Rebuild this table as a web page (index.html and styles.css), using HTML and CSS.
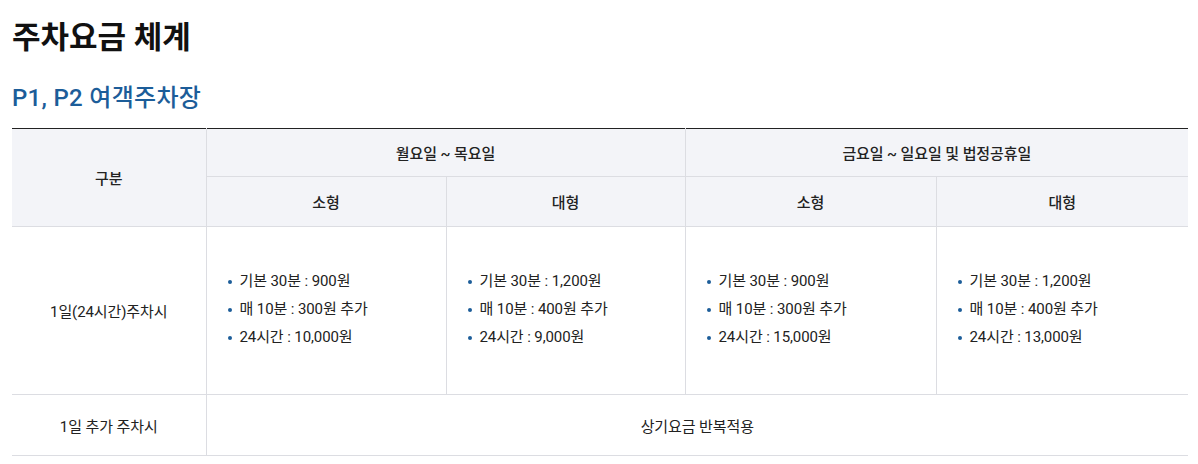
FILE: index.html
```html
<!DOCTYPE html>
<html lang="ko">
<head>
<meta charset="utf-8">
<link rel="stylesheet" href="styles.css">
</head>
<body>
<div class="page">
  <h2 class="title">주차요금 체계</h2>
  <h3 class="subtitle">P1, P2 여객주차장</h3>
  <table class="fee">
    <colgroup>
      <col class="c0"><col class="c1"><col class="c2"><col class="c3"><col class="c4">
    </colgroup>
    <thead>
      <tr class="h1">
        <th rowspan="2">구분</th>
        <th colspan="2">월요일 ~ 목요일</th>
        <th colspan="2">금요일 ~ 일요일 및 법정공휴일</th>
      </tr>
      <tr class="h2">
        <th>소형</th><th>대형</th><th>소형</th><th>대형</th>
      </tr>
    </thead>
    <tbody>
      <tr class="r1">
        <td class="label">1일(24시간)주차시</td>
        <td><ul><li>기본 30분 : 900원</li><li>매 10분 : 300원 추가</li><li>24시간 : 10,000원</li></ul></td>
        <td><ul><li>기본 30분 : 1,200원</li><li>매 10분 : 400원 추가</li><li>24시간 : 9,000원</li></ul></td>
        <td><ul><li>기본 30분 : 900원</li><li>매 10분 : 300원 추가</li><li>24시간 : 15,000원</li></ul></td>
        <td><ul><li>기본 30분 : 1,200원</li><li>매 10분 : 400원 추가</li><li>24시간 : 13,000원</li></ul></td>
      </tr>
      <tr class="r2">
        <td class="label">1일 추가 주차시</td>
        <td colspan="4" class="center">상기요금 반복적용</td>
      </tr>
    </tbody>
  </table>
</div>
</body>
</html>
```

FILE: styles.css
```css
html, body { margin: 0; padding: 0; background: #fff; }
body {
  font-family: "Roboto", "Noto Sans CJK KR", sans-serif;
  color: #222;
}
.page { padding: 19px 12px 0 12px; }
.title {
  margin: 0;
  font-size: 31px;
  line-height: 38px;
  font-weight: 700;
  color: #111;
  letter-spacing: 0;
}
.subtitle {
  margin: 21px 0 0 0;
  font-size: 24px;
  line-height: 40px;
  font-weight: 500;
  color: #1c5d99;
  letter-spacing: 0.3px;
}
.fee {
  margin-top: 10px;
  width: 1176px;
  border-collapse: collapse;
  table-layout: fixed;
  border-top: 1px solid #222;
  font-size: 15px;
  letter-spacing: -0.1px;
}
.c0 { width: 194px; }
.c1 { width: 240px; }
.c2 { width: 239px; }
.c3 { width: 251px; }
.c4 { width: 252px; }
.fee th {
  background: #f3f4f8;
  font-weight: 500;
  color: #222;
  border: 1px solid #dcdde2;
  text-align: center;
  padding: 0;
}
.fee tr.h1 th { height: 47px; border-top: none; }
.fee tr.h2 th { height: 49px; }
.fee td {
  border: 1px solid #dcdde2;
  padding: 0;
  vertical-align: middle;
}
.fee tr > *:first-child { border-left: none; }
.fee tr > *:last-child { border-right: none; }
.fee tr.r1 td { height: 167px; }
.fee tr.r2 td { height: 60px; }
.label, .center { text-align: center; }
.fee ul {
  margin: 0;
  padding: 0 0 3px 20px;
  list-style: none;
}
.fee li {
  position: relative;
  padding-left: 13px;
  line-height: 28px;
}
.fee li::before {
  content: "";
  position: absolute;
  left: 1px;
  top: 13px;
  width: 4px;
  height: 4px;
  border-radius: 50%;
  background: #1c5d99;
}
```
